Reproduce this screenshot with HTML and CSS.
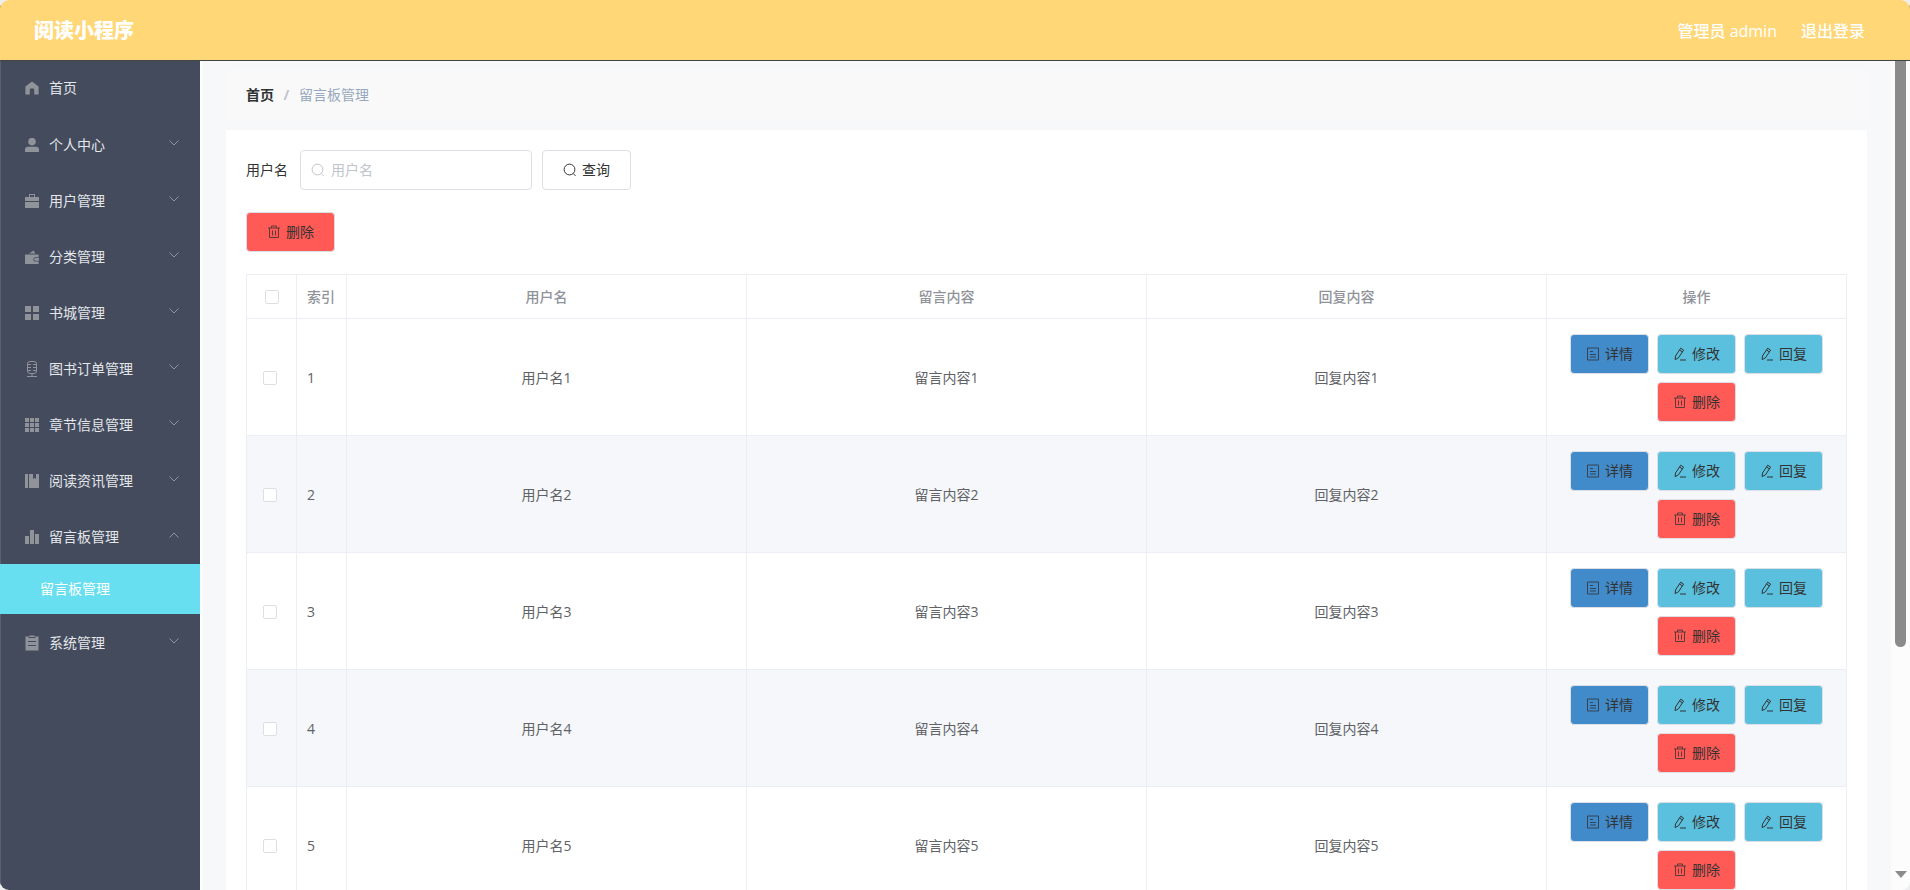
FILE: index.html
```html
<!DOCTYPE html>
<html lang="zh-CN">
<head>
<meta charset="utf-8">
<meta name="viewport" content="width=device-width, initial-scale=1">
<title>阅读小程序</title>
<link rel="stylesheet" href="styles.css">
</head>
<body>
<svg class="sprite" aria-hidden="true">
  <symbol id="i-home" viewBox="0 0 14 14"><path d="M7 .4 13.6 5.6V13.4H9.2V8.6a1 1 0 0 0-1-1H5.8a1 1 0 0 0-1 1v4.8H.4V5.6z"/></symbol>
  <symbol id="i-user" viewBox="0 0 14 14"><circle cx="7" cy="3.6" r="3.8"/><path d="M0 14v-2.200a3 3 0 0 1 3-3h8a3 3 0 0 1 3 3V14z"/></symbol>
  <symbol id="i-case" viewBox="0 0 14 14"><path fill-rule="evenodd" d="M4 0h6v3h4v4H0V3h4zM5 1v2h4V1zM0 8h14v6H0z"/></symbol>
  <symbol id="i-wallet" viewBox="0 0 14 14"><path d="M4 3.600 8.600.4 10.400 3.600zM0 4.600h13.600V7.200H10.500a2.200 2.200 0 0 0 0 4.400H13.600V14H0z"/><path d="M10.500 8.100H14v2.600H10.500a1.300 1.300 0 0 1 0-2.600z"/></symbol>
  <symbol id="i-menu" viewBox="0 0 14 14"><path d="M0 0h6v6H0zM8 0h6v6H8zM0 8h6v6H0zM8 8h6v6H8z"/></symbol>
  <symbol id="i-mic" viewBox="0 0 14 16"><g fill="none" stroke="currentColor"><rect x="2.500" y=".5" width="9" height="12" rx="2.500"/><path d="M3 3.500h3M8 3.500h3M3 6.500h3M8 6.500h3M3 9.500h3M8 9.500h3M7 12.500v3M2 15.500h10"/></g></symbol>
  <symbol id="i-grid" viewBox="0 0 14 14"><path d="M0 0h4v4H0zM5 0h4v4H5zM10 0h4v4h-4zM0 5h4v4H0zM5 5h4v4H5zM10 5h4v4h-4zM0 10h4v4H0zM5 10h4v4H5zM10 10h4v4h-4z"/></symbol>
  <symbol id="i-book" viewBox="0 0 14 14"><path d="M0 0h3v14H0zM4 0h4v5l1.500-1.200L11 5V0h3v14H4z"/></symbol>
  <symbol id="i-chart" viewBox="0 0 14 14"><path d="M0 6h4v8H0zM5 0h4v14H5zM10 4h4v10h-4z"/></symbol>
  <symbol id="i-order" viewBox="0 0 14 15"><path fill-rule="evenodd" d="M4.500 0h5v1H13.500v14H.5V1h4zM3 5.500v1h8v-1zM3 9.500v1h8v-1zM3.500 1.500v1h7v-1z"/></symbol>
  <symbol id="i-chevron" viewBox="0 0 10 6"><path d="M.5.5 5 5 9.500.5" fill="none" stroke="currentColor"/></symbol>
  <symbol id="i-search" viewBox="0 0 14 14"><g fill="none" stroke="currentColor"><circle cx="6.500" cy="6.500" r="5.400"/><path d="m10.300 10.500 2.200 2.400"/></g></symbol>
  <symbol id="i-trash" viewBox="0 0 14 14"><path d="M1 3h12M4.500 3V1h5v2M2.500 3v9.500h9V3M5.500 5.500v5M8.500 5.500v5" fill="none" stroke="currentColor"/></symbol>
  <symbol id="i-doc" viewBox="0 0 14 14"><path d="M1.500 1h11v12h-11zM4 4.500h3M4 7.500h6M4 10h6" fill="none" stroke="currentColor"/></symbol>
  <symbol id="i-edit" viewBox="0 0 14 14"><path d="M2.500 9 7.700 1.200 10.600 3.100 5.400 10.900 2.100 12.600zM6.500 3 9.400 4.900M7 13h6" fill="none" stroke="currentColor"/></symbol>
</svg>
<div class="app">
  <header class="topbar">
    <h1 class="brand">阅读小程序</h1>
    <div class="account">
      <span>管理员 admin</span>
      <a href="#logout">退出登录</a>
    </div>
  </header>
  <div class="body">
    <nav class="sidebar">
      <a class="item" href="#home"><svg class="icon"><use href="#i-home"/></svg><span>首页</span></a>
      <button class="item" type="button"><svg class="icon"><use href="#i-user"/></svg><span>个人中心</span><svg class="arrow"><use href="#i-chevron"/></svg></button>
      <button class="item" type="button"><svg class="icon"><use href="#i-case"/></svg><span>用户管理</span><svg class="arrow"><use href="#i-chevron"/></svg></button>
      <button class="item" type="button"><svg class="icon"><use href="#i-wallet"/></svg><span>分类管理</span><svg class="arrow"><use href="#i-chevron"/></svg></button>
      <button class="item" type="button"><svg class="icon"><use href="#i-menu"/></svg><span>书城管理</span><svg class="arrow"><use href="#i-chevron"/></svg></button>
      <button class="item" type="button"><svg class="icon icon-tall"><use href="#i-mic"/></svg><span>图书订单管理</span><svg class="arrow"><use href="#i-chevron"/></svg></button>
      <button class="item" type="button"><svg class="icon"><use href="#i-grid"/></svg><span>章节信息管理</span><svg class="arrow"><use href="#i-chevron"/></svg></button>
      <button class="item" type="button"><svg class="icon"><use href="#i-book"/></svg><span>阅读资讯管理</span><svg class="arrow"><use href="#i-chevron"/></svg></button>
      <button class="item" type="button" aria-expanded="true"><svg class="icon"><use href="#i-chart"/></svg><span>留言板管理</span><svg class="arrow arrow-up"><use href="#i-chevron"/></svg></button>
      <a class="subitem" href="#messages" aria-current="page">留言板管理</a>
      <button class="item" type="button"><svg class="icon icon-tall"><use href="#i-order"/></svg><span>系统管理</span><svg class="arrow"><use href="#i-chevron"/></svg></button>
    </nav>
    <main class="main">
      <nav class="crumbs" aria-label="面包屑"><a href="#home">首页</a><span class="sep">/</span><span class="here">留言板管理</span></nav>
      <section class="card">
        <form class="search">
          <label for="q">用户名</label>
          <div class="field"><svg class="glyph"><use href="#i-search"/></svg><input id="q" type="text" placeholder="用户名"></div>
          <button class="btn btn-search" type="button"><svg class="glyph"><use href="#i-search"/></svg>查询</button>
        </form>
        <button class="btn btn-bulk danger" type="button"><svg class="glyph"><use href="#i-trash"/></svg>删除</button>
        <table class="grid">
          <colgroup><col class="c-narrow"><col class="c-narrow"><col><col><col><col class="c-ops"></colgroup>
          <thead>
            <tr><th><input type="checkbox" aria-label="全选"></th><th class="idx">索引</th><th>用户名</th><th>留言内容</th><th>回复内容</th><th>操作</th></tr>
          </thead>
          <tbody id="rows"></tbody>
        </table>
      </section>
    </main>
    <div class="scroll" aria-hidden="true"><div class="thumb"></div><div class="down"></div></div>
  </div>
</div>
<script src="app.js"></script>
</body>
</html>
```
FILE: styles.css
```css
* { box-sizing: border-box; }
body {
  margin: 0;
  background: #eceef0;
  color: #333;
  font: 14px/20px "Open Sans", "Noto Sans CJK SC", sans-serif;
}
button, input { font: inherit; color: inherit; }
a { color: inherit; text-decoration: none; }
.sprite { position: absolute; width: 0; height: 0; }
svg { fill: currentColor; flex: none; }

.app {
  display: flex;
  flex-direction: column;
  height: 100vh;
  overflow: hidden;
  border-radius: 9px;
  background: #fff;
}
.topbar {
  position: relative;
  z-index: 1;
  flex: none;
  display: flex;
  align-items: center;
  justify-content: space-between;
  height: 60px;
  padding: 2px 45px 0 34px;
  background: #ffd777;
  box-shadow: 0 1px 0 #444;
  color: #fff;
}
.brand { margin: 0; font-size: 20px; line-height: 28px; font-weight: 900; }
.account { display: flex; gap: 24px; font-size: 16px; line-height: 24px; font-weight: 500; }

.body { flex: 1; min-height: 0; display: flex; }
.sidebar {
  flex: none;
  width: 200px;
  background: #434b5d;
  box-shadow: inset 1px 0 0 #596071;
  color: #fff;
}
.item {
  display: flex;
  align-items: center;
  width: 100%;
  height: 56px;
  padding: 2px 21px 0 25px;
  border: 0;
  background: none;
  color: #e4e6ea;
  text-align: left;
}
a.item { padding-top: 0; }
.item span { flex: 1; margin-left: 10px; }
.icon { width: 14px; height: 14px; color: #909399; }
.icon-tall { height: 16px; }
.arrow { width: 10px; height: 6px; margin-bottom: 4px; color: #909399; }
.arrow-up { transform: rotate(180deg); }
.subitem {
  display: block;
  padding-left: 40px;
  background: #68dff0;
  color: #fff;
  line-height: 50px;
}

.main {
  flex: 1;
  min-width: 0;
  overflow: hidden;
  margin-left: 2px;
  padding: 10px 24px 0;
  background: #f6f8fa;
}
.crumbs {
  display: flex;
  align-items: center;
  height: 50px;
  margin-bottom: 10px;
  padding: 0 20px;
  border-radius: 4px;
  background: #f9f9f9;
}
.crumbs a { color: #303133; font-weight: 700; }
.sep { width: 25px; text-align: center; color: #c0c4cc; font-weight: 700; }
.here { color: #97a8be; }
.card { padding: 20px; background: #fff; }
.search { display: flex; align-items: center; margin-bottom: 22px; }
.field {
  display: flex;
  align-items: center;
  gap: 6px;
  width: 232px;
  height: 40px;
  margin: 0 10px 0 12px;
  padding: 0 10px;
  border: 1px solid #dcdfe6;
  border-radius: 4px;
  color: #c0c4cc;
}
.field input {
  flex: 1;
  min-width: 0;
  padding: 0;
  border: 0;
  outline: 0;
  background: none;
  color: #606266;
}
.field input::placeholder { color: #c0c4cc; opacity: 1; }
.glyph { width: 14px; height: 14px; }
.btn {
  display: flex;
  align-items: center;
  justify-content: center;
  gap: 5px;
  width: 79px;
  height: 40px;
  padding: 0;
  border: 1px solid #dcdfe6;
  border-radius: 4px;
  background: #fff;
  color: #333;
}
.btn-search, .btn-bulk { width: 89px; }
.btn-bulk { margin-bottom: 22px; }
.danger { background: #ff5a56; }
.danger .glyph, .primary .glyph { opacity: 0.8; }
.primary { background: #428bca; }
.info { background: #5bc0de; }

.grid {
  width: 100%;
  table-layout: fixed;
  border-collapse: collapse;
  color: #606266;
}
.c-narrow { width: 50px; }
.c-ops { width: 300px; }
.grid th, .grid td {
  padding: 0 10px;
  border: 1px solid #ebeef5;
  text-align: center;
}
.grid th { height: 44px; color: #909399; font-weight: 500; }
.grid td { height: 117px; padding-top: 1px; }
.grid .idx { padding-right: 0; text-align: left; }
.grid tbody tr:nth-child(even) { background: #f5f7fa; }
.grid td.pick { padding-right: 14px; }
.grid input {
  appearance: none;
  display: block;
  width: 14px;
  height: 14px;
  margin: 0 auto;
  border: 1px solid #dcdfe6;
  border-radius: 2px;
  background: #fff;
}
.ops {
  display: flex;
  flex-wrap: wrap;
  justify-content: center;
  gap: 8px;
}

.scroll {
  flex: none;
  display: flex;
  flex-direction: column;
  align-items: center;
  justify-content: space-between;
  width: 19px;
  padding-bottom: 12px;
  background: #fcfcfc;
}
.thumb { width: 11px; height: 71.7%; border-radius: 0 0 6px 6px; background: #8b8b8b; }
.down { border: 6px solid transparent; border-top: 7px solid #8b8b8b; border-bottom: 0; }
```
FILE: app.js
```js
const icon = (name) => `<svg class="glyph"><use href="#i-${name}"/></svg>`;
const button = (kind, name, text) =>
  `<button class="btn ${kind}" type="button">${icon(name)}${text}</button>`;

const row = (n) => `<tr>
  <td class="pick"><input type="checkbox" aria-label="选择第${n}行"></td>
  <td class="idx">${n}</td>
  <td>用户名${n}</td>
  <td>留言内容${n}</td>
  <td>回复内容${n}</td>
  <td><div class="ops">
    ${button("primary", "doc", "详情")}
    ${button("info", "edit", "修改")}
    ${button("info", "edit", "回复")}
    ${button("danger", "trash", "删除")}
  </div></td>
</tr>`;

document.getElementById("rows").innerHTML = [1, 2, 3, 4, 5].map(row).join("");
```
